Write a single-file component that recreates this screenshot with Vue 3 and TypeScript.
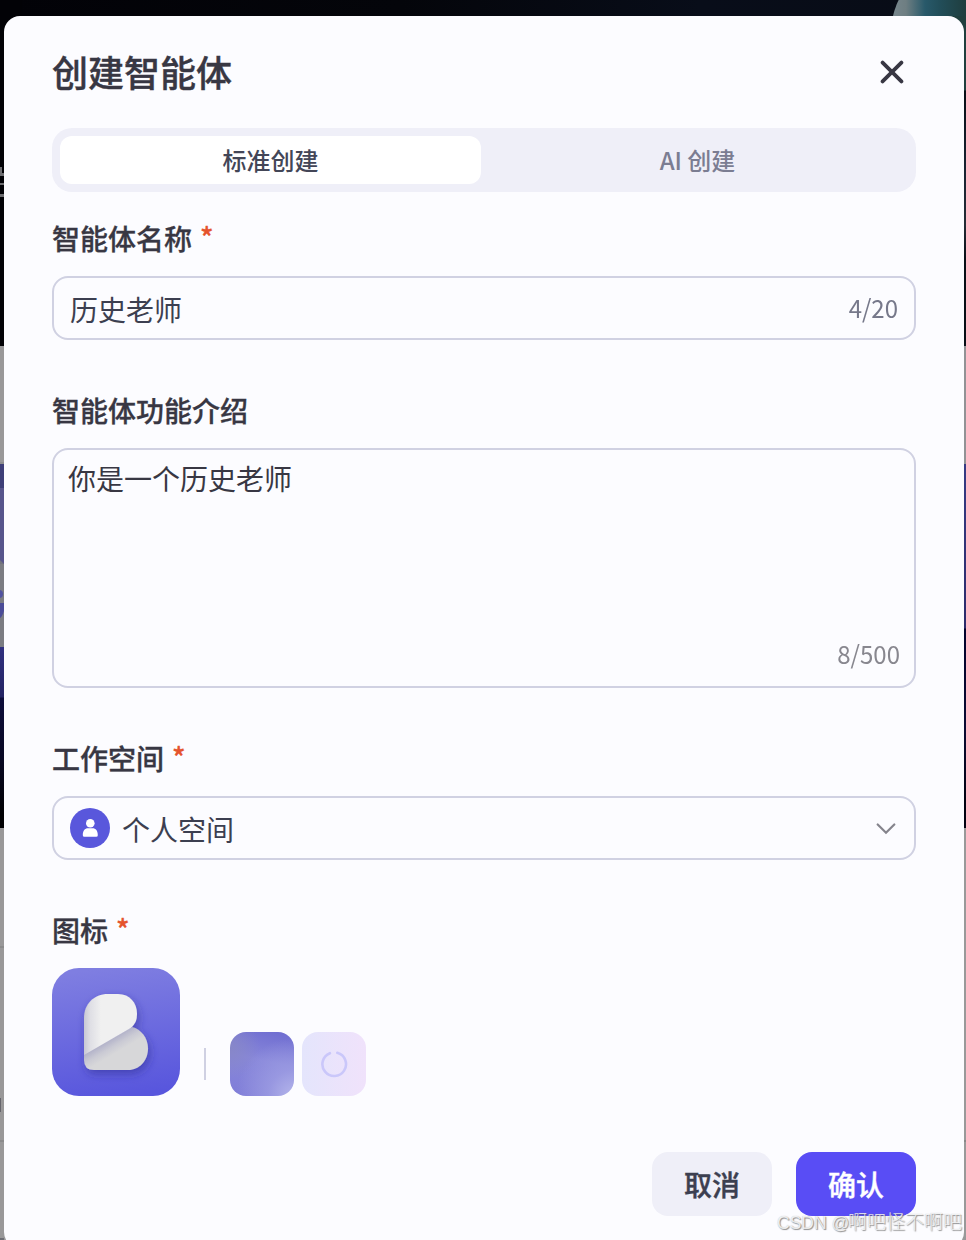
<script setup lang="ts">
import { ref } from 'vue'

const tabs: string[] = ['标准创建', 'AI 创建']
const activeTab = ref(0)
const name = ref('历史老师')
const intro = '你是一个历史老师'
const introCount = 8
</script>

<template>
  <div class="page">
    <div class="backdrop">
      <div class="strip left">
        <svg width="4" height="1240" viewBox="0 0 4 1240">
          <path fill="#6d6d70" d="M0 167h2v6h2v3H0zM0 183h4v2H0zM0 194h4v3H0z" />
          <path fill="#3e3f78" d="M0 464h4v24H0z" />
          <path fill="#57558c" d="M0 488h4v76l-4-4z" />
          <circle cx="-1" cy="594" r="4" fill="#5152a0" />
          <path fill="#4b4c98" d="M0 603h4v8q-2 6-4 7z" />
          <path fill="#8b8b8c" d="M0 946h4v2H0zM0 1140h4v2H0z" />
          <path fill="#66656c" d="M0 1098h1v14H0z" />
          <path fill="#6e6e75" d="M0 1238h4v2H0z" />
        </svg>
      </div>
      <div class="planet"></div>
      <div class="strip right"></div>
    </div>

    <section class="dialog">
      <header class="header">
        <h1>创建智能体</h1>
        <button class="close" aria-label="关闭">
          <svg width="24" height="24" viewBox="0 0 24 24">
            <path d="M2.6 2.6l18.8 18.8M21.4 2.6L2.6 21.4" stroke="#383743" stroke-width="3.8" stroke-linecap="round" />
          </svg>
        </button>
      </header>

      <nav class="tabs">
        <button
          v-for="(tab, i) in tabs"
          :key="tab"
          class="tab"
          :class="{ active: activeTab === i }"
          @click="activeTab = i"
        >{{ tab }}</button>
      </nav>

      <div class="field">
        <div class="label">智能体名称<span class="star">*</span></div>
        <div class="control input">
          <span class="value">{{ name }}</span>
          <span class="count">{{ name.length }}/20</span>
        </div>
      </div>

      <div class="field">
        <div class="label">智能体功能介绍</div>
        <div class="control area">
          <span>{{ intro }}</span>
          <span class="count">{{ introCount }}/500</span>
        </div>
      </div>

      <div class="field">
        <div class="label">工作空间<span class="star">*</span></div>
        <div class="control select">
          <svg width="40" height="40" viewBox="0 0 40 40">
            <circle cx="20" cy="20" r="20" fill="#5957dc" />
            <circle cx="20.3" cy="15.2" r="4.3" fill="#fff" />
            <path fill="#fff" d="M12.8 27.2c0-4.600 2-6.900 5.300-6.900h4.400c3.300 0 5.300 2.300 5.300 6.900q0 1.600-1.600 1.600H14.400q-1.600 0-1.600-1.600z" />
          </svg>
          <span class="value">个人空间</span>
          <svg class="chevron" width="20" height="12" viewBox="0 0 20 12">
            <path d="M1.700 1.500L10 9.800L18.300 1.500" fill="none" stroke="#85848c" stroke-width="2.200" stroke-linecap="round" />
          </svg>
        </div>
      </div>

      <div class="field">
        <div class="label">图标<span class="star">*</span></div>
        <div class="icons">
          <svg class="avatar" width="128" height="128" viewBox="0 0 128 128">
            <defs>
              <linearGradient id="bg" x1="0.400" y1="0" x2="0.550" y2="1">
                <stop offset="0" stop-color="#7f7ee1" />
                <stop offset="1" stop-color="#5856dd" />
              </linearGradient>
              <linearGradient id="upper" x1="0" y1="0" x2="1" y2="0">
                <stop offset="0" stop-color="#c8c8d4" />
                <stop offset="0.120" stop-color="#dfdfe5" />
                <stop offset="0.320" stop-color="#f0f0f0" />
                <stop offset="1" stop-color="#f0f0f0" />
              </linearGradient>
              <linearGradient id="lower" gradientUnits="userSpaceOnUse" x1="55" y1="74" x2="62" y2="86">
                <stop offset="0" stop-color="#b4b4ca" />
                <stop offset="0.500" stop-color="#cacad4" />
                <stop offset="1" stop-color="#d7d7d9" />
              </linearGradient>
              <filter id="drop" x="-30%" y="-30%" width="160%" height="170%">
                <feDropShadow dx="2" dy="4" stdDeviation="4" flood-color="#28268c" flood-opacity="0.500" />
              </filter>
            </defs>
            <rect width="128" height="128" rx="27" fill="url(#bg)" />
            <g filter="url(#drop)">
              <path fill="url(#lower)" d="M32 86L80 59C89 61 96 70 96 80.500C96 92.500 87.500 102 76 102H42Q32 102 32 92z" />
              <path fill="url(#upper)" d="M32 50C32 36 42 26 56 26H66C78 26 85 35 85 46C85 53 82.500 57.500 77 61L32 87z" />
            </g>
          </svg>
          <span class="divider"></span>
          <span class="swatch"></span>
          <span class="generate">
            <svg width="28" height="28" viewBox="0 0 28 28">
              <path d="M9.900 3.200A11.800 11.800 0 1 0 17.300 2.800" fill="none" stroke="#cac7fa" stroke-width="2.600" stroke-linecap="round" />
            </svg>
          </span>
        </div>
      </div>

      <footer class="footer">
        <button class="btn cancel">取消</button>
        <button class="btn confirm">确认</button>
      </footer>
    </section>
    <div class="watermark"><span class="latin">CSDN @</span>啊吧怪不啊吧</div>
  </div>
</template>

<style>
html,
body {
  margin: 0;
  overflow: hidden;
}
</style>

<style scoped>
* {
  box-sizing: border-box;
}
.page {
  position: relative;
  width: 966px;
  height: 1240px;
  overflow: hidden;
  padding: 16px 2px 0 4px;
  background: linear-gradient(90deg, #020207 0, #04050a 400px, #080d19 700px, #080c16 100%);
  font-family: 'Noto Sans CJK SC', sans-serif;
  color: #383743;
}
.backdrop {
  position: absolute;
  inset: 0;
}
.strip {
  position: absolute;
  top: 0;
  bottom: 0;
  overflow: hidden;
}
.strip svg {
  position: absolute;
  inset: 0;
}
.left {
  left: 0;
  width: 22px;
  background: linear-gradient(#020206 0 346px, #999899 346px 462px, #8e8e8f 462px 464px, #72737d 464px 564px, #7b7c82 564px 647px, #303080 647px, #242463 697px, #0d0d3b 698px, #090923 760px, #010103 815px 828px, #999899 828px 1240px);
}
.right {
  right: 0;
  width: 22px;
  background: linear-gradient(transparent 0 16px, #203f3e 16px 90px, #080e16 91px, #192332 170px, #252b35 225px, #080e16 260px 346px, #929295 346px 464px, #363b84 464px, #2d2b6b 628px, #02022c 629px, #0b0b33 730px, #020211 800px 828px, #999 828px 1140px, #888 1140px 1142px, #999 1142px);
}
.planet {
  position: absolute;
  left: 891px;
  top: -42px;
  width: 150px;
  height: 150px;
  border-radius: 50%;
  background: linear-gradient(90deg, #78878d 0, #6e7e82 15px, #28596a 34px, #224e5a 48px, #1f3d3d 76px);
}
.dialog {
  position: relative;
  height: 1232px;
  padding: 32px 48px;
  border-radius: 16px;
  background: #fcfcff;
}
button {
  border: 0;
  padding: 0;
  font-family: inherit;
  color: inherit;
}
.header {
  display: flex;
  align-items: center;
  justify-content: space-between;
  height: 48px;
  margin-bottom: 32px;
}
h1 {
  margin: 0;
  font-size: 36px;
  line-height: 48px;
  font-weight: 500;
  padding-bottom: 3px;
  -webkit-text-stroke: 0.400px currentColor;
}
.close {
  display: grid;
  place-items: center;
  width: 48px;
  height: 48px;
  background: none;
}
.tabs {
  display: flex;
  gap: 6px;
  height: 64px;
  padding: 8px;
  margin-bottom: 28px;
  border-radius: 20px;
  background: #efeff8;
}
.tab {
  flex: 1;
  border-radius: 12px;
  background: none;
  font-size: 24px;
  line-height: 48px;
  font-weight: 500;
  color: #7b7d92;
}
.tab.active {
  background: #fff;
  color: #434657;
}
.field + .field {
  margin-top: 52px;
}
.label {
  height: 40px;
  margin-bottom: 16px;
  font-size: 28px;
  line-height: 37px;
  font-weight: 500;
  -webkit-text-stroke: 0.300px currentColor;
}
.star {
  display: inline-block;
  margin-left: 8px;
  line-height: 32px;
  vertical-align: 2px;
  color: #e5532d;
}
.control {
  display: flex;
  border: 2px solid #d0d1e2;
  border-radius: 16px;
  padding: 0 16px;
  font-size: 28px;
  color: #3c3f50;
}
.input,
.select {
  height: 64px;
  align-items: center;
}
.value {
  padding-top: 1px;
}
.count {
  font-size: 24px;
  color: #76788a;
  transform: scaleY(1.050);
}
.input {
  justify-content: space-between;
}
.input .count {
  padding-bottom: 2px;
}
.area {
  height: 240px;
  flex-direction: column;
  justify-content: space-between;
  padding: 8px 14px 12px;
  line-height: 40px;
  color: #383743;
}
.area .count {
  align-self: flex-end;
  color: #88878f;
}
.select {
  gap: 12px;
}
.chevron {
  margin: 2px 2px 0 auto;
}
.icons {
  display: flex;
  align-items: flex-end;
  height: 128px;
}
.divider {
  width: 2px;
  height: 32px;
  margin: 0 24px 16px;
  background: #cfd0e2;
}
.swatch,
.generate {
  width: 64px;
  height: 64px;
  border-radius: 16px;
}
.swatch {
  margin-right: 8px;
  background:
    radial-gradient(circle at 100% 100%, #b5b6eb 0, rgba(160, 160, 228, 0.700) 26px, rgba(160, 160, 228, 0) 58px),
    radial-gradient(circle at 0 25%, #8787c8 0, rgba(135, 135, 204, 0) 30px),
    linear-gradient(192deg, #6d6bd0 0%, #8887da 45%, #7f7dd8 100%);
}
.generate {
  display: grid;
  place-items: center;
  background: linear-gradient(90deg, #e4e5fc, #f0e2fb);
}
.footer {
  display: flex;
  justify-content: flex-end;
  gap: 24px;
  margin-top: 56px;
}
.btn {
  width: 120px;
  height: 64px;
  padding-top: 1px;
  border-radius: 16px;
  font-size: 28px;
  line-height: 63px;
  font-weight: 500;
  -webkit-text-stroke: 0.400px currentColor;
}
.cancel {
  background: #efeff8;
  color: #3c3f50;
}
.confirm {
  background: #594df5;
  color: #fff;
}
.watermark {
  position: absolute;
  left: 777px;
  top: 1208px;
  white-space: nowrap;
  font-family: 'Noto Sans CJK SC', sans-serif;
  font-weight: 300;
  font-size: 19px;
  line-height: 26px;
  color: rgba(255, 255, 255, 0.800);
  text-shadow: 1px 1px 1px rgba(100, 100, 100, 0.700), 0 0 1px rgba(110, 110, 110, 0.450);
}
.latin {
  display: inline-block;
  width: 71px;
  font-family: 'Liberation Sans', sans-serif;
  font-size: 17.500px;
  white-space: pre;
}
</style>
